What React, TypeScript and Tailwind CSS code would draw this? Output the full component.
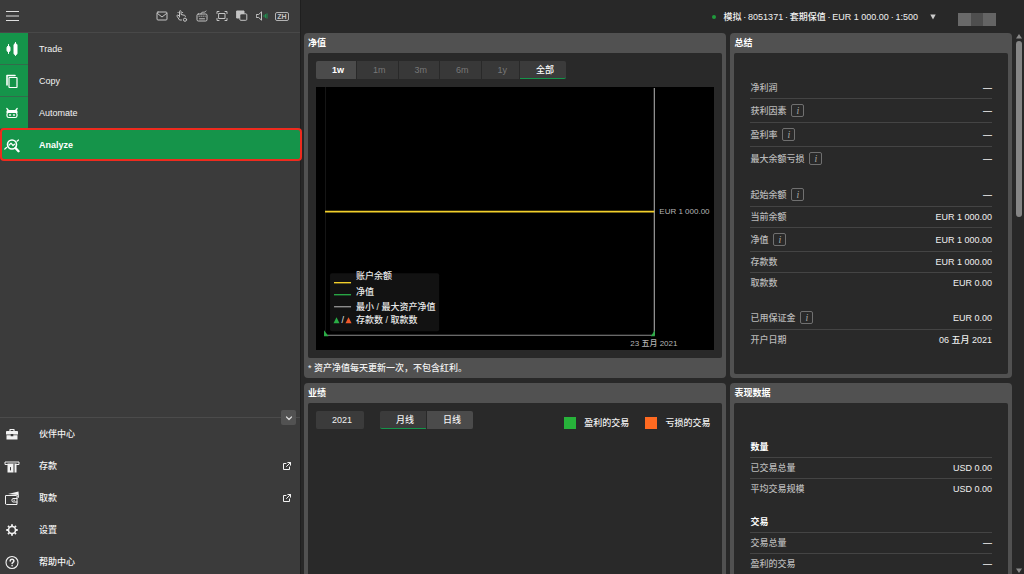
import type { ReactNode } from "react";

type IconProps = { children: ReactNode; size?: string; box?: number };

function Icon({ children, size = "size-4", box = 16 }: IconProps) {
  return (
    <svg
      viewBox={`0 0 ${box} ${box}`}
      className={`${size} shrink-0`}
      fill="none"
      stroke="currentColor"
      strokeWidth={1}
      strokeLinecap="round"
      strokeLinejoin="round"
      aria-hidden="true"
    >
      {children}
    </svg>
  );
}

const toolbar: { label: string; icon: ReactNode }[] = [
  {
    label: "Messages",
    icon: (
      <Icon size="size-3" box={12}>
        <rect x="1" y="2" width="10" height="8" rx="1" />
        <path d="M1.5 3.500 6 7l4.500-3.500" />
      </Icon>
    ),
  },
  {
    label: "One click trading",
    icon: (
      <Icon size="size-3" box={12}>
        <path d="M3.500 7V1.500a.8.8 0 0 1 1.600 0V4.500l3.400.8c.8.2 1 .7.9 1.300M3.500 6 1.800 5.200c-.7-.2-1.200.4-.8 1l2.500 3.800h2" />
        <path d="M2 2.500h.2M6.500 2.500h.2" />
        <circle cx="9" cy="9.700" r="1.600" />
      </Icon>
    ),
  },
  {
    label: "Shortcuts",
    icon: (
      <Icon size="size-3" box={12}>
        <rect x="1" y="4" width="10" height="7" rx="1.300" />
        <path d="M5 4c0-1.500 1-1.800 2.500-1.800S9.500 1.800 10 1" />
        <path d="M3 6.200h.4M5 6.200h.4M7 6.200h.4M9 6.200h.2M3.500 8.800h5" />
      </Icon>
    ),
  },
  {
    label: "Full screen",
    icon: (
      <Icon size="size-3" box={12}>
        <path d="M1 3.500V1.500h2M9 1.500h2v2M11 8.500v2H9M3 10.500H1v-2" />
        <rect x="3" y="3.500" width="6" height="5" />
      </Icon>
    ),
  },
  {
    label: "Detach",
    icon: (
      <Icon size="size-3" box={12}>
        <path d="M1 1h7v2.500H3.500V8H1z" fill="currentColor" />
        <rect x="3.800" y="3.800" width="7" height="6.500" rx="1" />
      </Icon>
    ),
  },
  {
    label: "Sound",
    icon: (
      <Icon size="size-3" box={12}>
        <path d="M.7 4.500h2l2.800-2.700v8.400L2.700 7.500h-2z" />
        <path d="M8 5.200v1.600M9.500 4.500v3M11 3.800v4.400" stroke="#219451" />
      </Icon>
    ),
  },
];

const modes: { label: string; icon: ReactNode }[] = [
  {
    label: "Trade",
    icon: (
      <Icon>
        <path d="M4.500 3.500v9M11.500 1.500v13" />
        <rect x="3" y="5.500" width="3" height="5" rx="1" fill="currentColor" />
        <rect x="10" y="3" width="3" height="10.500" rx="1" fill="currentColor" />
      </Icon>
    ),
  },
  {
    label: "Copy",
    icon: (
      <Icon>
        <path d="M3 12V2.500h8" strokeWidth="1.600" />
        <rect x="5" y="4.500" width="8" height="10" rx=".5" strokeWidth="1.200" />
      </Icon>
    ),
  },
  {
    label: "Automate",
    icon: (
      <Icon>
        <path d="M2.800 3.500 4.500 5.500M13.200 3.500 11.500 5.500" strokeWidth="1.200" />
        <path d="M2.500 8V6.500c0-1 .8-1.500 1.500-1.500h8c.7 0 1.500.5 1.500 1.500V8z" fill="currentColor" stroke="none" />
        <rect x="3" y="7.500" width="10" height="5" rx="1.800" strokeWidth="1.200" />
        <path d="M5.600 10h.9M9.500 10h.9" strokeWidth="1.500" />
      </Icon>
    ),
  },
];

const links: { label: string; external?: boolean; icon: ReactNode }[] = [
  {
    label: "伙伴中心",
    icon: (
      <Icon>
        <path d="M6 5V3.500h4V5" strokeWidth="1.200" />
        <path d="M3 5h10c.6 0 1 .4 1 1v2.500H9.300V8H6.700v.5H2V6c0-.6.4-1 1-1z" fill="currentColor" stroke="none" />
        <path d="M2.500 9.300h4.200v.9h2.600v-.9h4.200V13.500h-11z" fill="currentColor" stroke="none" />
      </Icon>
    ),
  },
  {
    label: "存款",
    external: true,
    icon: (
      <Icon>
        <path d="M3.500 6.500H1V4h14v2.500h-2.500" />
        <path d="M3.500 5.500h9V14.500h-9z" fill="currentColor" stroke="none" />
        <path d="M10 6v8.500M6.500 9.500v2.500" stroke="#3b3b3b" />
      </Icon>
    ),
  },
  {
    label: "取款",
    external: true,
    icon: (
      <Icon>
        <path d="M4 4 14.500 1.500 15 8l-1.500-1V5z" fill="currentColor" stroke="none" />
        <path d="M2 5.500h10.500l.5 1v8H2.500L1.500 14V6z" />
        <path d="M13 8.500H9c-1.500 0-1.500 3.500 0 3.500h4M9.800 10.200h.8" />
      </Icon>
    ),
  },
  {
    label: "设置",
    icon: (
      <Icon>
        <circle cx="8" cy="8" r="3.500" strokeWidth="1.600" />
        <path
          d="M8 2.300v1.800M8 11.900v1.800M2.300 8h1.800M11.900 8h1.800M4 4l1.200 1.200M10.800 10.800 12 12M4 12l1.200-1.200M10.800 5.200 12 4"
          strokeWidth="1.800"
          strokeLinecap="butt"
        />
      </Icon>
    ),
  },
  {
    label: "帮助中心",
    icon: (
      <Icon>
        <circle cx="8" cy="8.500" r="6" strokeWidth="1.100" />
        <path d="M6.200 7c0-2.500 3.700-2.300 3.700 0 0 1.300-1.800 1.300-1.800 2.600M8.100 11.500v.2" strokeWidth="1.500" />
      </Icon>
    ),
  },
];

function Sidebar() {
  return (
    <aside className="z-10 flex w-[300px] shrink-0 flex-col bg-[#3b3b3b] text-[#f2f2f2]">
      <header className="flex h-[33px] shrink-0 items-center justify-between border-b border-[#484848] pr-2 pl-1 text-[#c4c4c4]">
        <button type="button" aria-label="Menu" className="text-[#dedede]">
          <Icon>
            <path d="M2 3.500h13M2 8h13M2 12.500h13" strokeLinecap="butt" />
          </Icon>
        </button>
        <div className="flex">
          {toolbar.map((t) => (
            <button key={t.label} type="button" aria-label={t.label} className="flex w-5 justify-center">
              {t.icon}
            </button>
          ))}
          <button type="button" className="flex w-5 items-center justify-center">
            <span className="rounded-xs border border-[#b4b4b4] px-px text-[7px] leading-[7px] font-bold">ZH</span>
          </button>
        </div>
      </header>

      <nav className="flex flex-col">
        {modes.map((m) => (
          <a key={m.label} href="#" className="flex h-8 items-center gap-[11px]">
            <span className="flex h-8 w-7 items-center border-b border-[#336b4b] bg-[#15944a] pl-1 text-white">
              {m.icon}
            </span>
            {m.label}
          </a>
        ))}
        <a
          href="#"
          aria-current="page"
          className="-mt-px -mr-0.5 flex h-[33px] items-center gap-[11px] rounded-sm border-2 border-[#ee2b1e] bg-[#15944a] font-bold text-white"
        >
          <span className="flex w-[26px] items-center pl-0.5">
            <Icon>
              <circle cx="8" cy="7.500" r="4.500" strokeWidth="1.600" />
              <path d="m11.500 11 3 3.200" strokeWidth="2.400" />
              <path d="M.8 12 2.500 10.500M5.200 8 7 6.200l2 2.300 1.500-1.300M13 4.200l1.500-1.200" strokeWidth="1.200" />
            </Icon>
          </span>
          Analyze
        </a>
      </nav>

      <nav className="relative mt-auto -mb-1 border-t border-[#4b4b4b]">
        <button
          type="button"
          aria-label="Collapse"
          className="absolute -top-2 right-1 flex size-[15px] items-center justify-center rounded-xs bg-[#525252] text-[#dcdcdc]"
        >
          <Icon size="size-2" box={8}>
            <path d="M1.500 3 4 5.500 6.500 3" strokeWidth="1.200" />
          </Icon>
        </button>
        {links.map((l) => (
          <a key={l.label} href="#" className="flex h-8 items-center pr-2 pl-1">
            {l.icon}
            <span className="ml-[19px] flex-1">{l.label}</span>
            {l.external && (
              <Icon size="size-[10px]" box={10}>
                <path d="M4 2.500H1.500v6h6V6M5.800 1.500h2.700v2.700M8.500 1.500 4.500 5.500" />
              </Icon>
            )}
          </a>
        ))}
      </nav>
    </aside>
  );
}

function Panel({ title, footer, children }: { title: string; footer?: string; children: ReactNode }) {
  return (
    <section className="flex flex-col rounded-sm bg-[#515151] px-1">
      <h2 className="h-5 shrink-0 leading-5 font-bold text-white">{title}</h2>
      <div className="flex-1 rounded-xs bg-[#292929]">{children}</div>
      {footer ? <p className="h-5 leading-5">{footer}</p> : <div className="h-1" />}
    </section>
  );
}

function EquityChart() {
  return (
    <svg viewBox="0 0 398 263" className="block w-full bg-black" role="img" aria-label="净值">
      <path d="M9.500 0v247" stroke="#161616" />
      <path d="M338 1v247" stroke="#9a9a9a" strokeWidth="1.200" />
      <path d="M10 248h328" stroke="#8c8c8c" strokeWidth="1.200" />
      <path d="M9 124.500h329" stroke="#f2cf2b" strokeWidth="1.600" />
      <path d="M8 249v-6l4.500 6zM338.500 249v-6l-4 6z" fill="#2aad45" />
      <g fill="#b4b4b4" className="text-[8px]">
        <text x="343" y="127">EUR 1 000.00</text>
        <text x="314" y="259">23 五月 2021</text>
      </g>
      <rect x="14" y="186" width="109" height="58" rx="2" fill="#121212" />
      <path d="M18 195.500h17" stroke="#f2cf2b" strokeWidth="1.400" />
      <path d="M18 207.500h17" stroke="#28a544" strokeWidth="1.400" />
      <path d="M18 219.500h17" stroke="#8c8c8c" strokeWidth="1.400" />
      <path d="M17.500 236l3-6 3 6z" fill="#2aad45" />
      <path d="M29.500 236l3-6 3 6z" fill="#f0592b" />
      <g fill="#e8e8e8" className="text-[9px]">
        <text x="25.500" y="236">/</text>
        <text x="40" y="192">账户余额</text>
        <text x="40" y="208">净值</text>
        <text x="40" y="223">最小 / 最大资产净值</text>
        <text x="40" y="236">存款数 / 取款数</text>
      </g>
    </svg>
  );
}

const tabBase = "h-[18px] border-b pr-3 pl-4";
const ranges = ["1w", "1m", "3m", "6m", "1y", "全部"];

function RangeTabs() {
  return (
    <div className="mb-2 flex gap-px">
      {ranges.map((r, i) => {
        const look =
          i === 0
            ? "rounded-l-xs border-[#4b4b4b] bg-[#4b4b4b] font-bold text-white"
            : i === 5
              ? "rounded-r-xs border-[#15944a] bg-[#3b3b3b] text-white"
              : "border-[#383838] bg-[#383838] text-[#777777]";
        return (
          <button key={r} type="button" className={`${tabBase} ${look}`}>
            {r}
          </button>
        );
      })}
    </div>
  );
}

type Row = { label: string; value?: string; info?: boolean; head?: boolean };

function Rows({ groups }: { groups: Row[][] }) {
  return (
    <div className="flex flex-col gap-3">
      {groups.map((g) => (
        <dl key={g[0].label}>
          {g.map((r) => (
            <div
              key={r.label}
              className={`flex items-center justify-between border-b border-[#444444] last:border-transparent ${r.info ? "h-6" : "h-[21px]"}`}
            >
              <dt className={`flex items-center gap-[5px] ${r.head ? "font-bold text-white" : "text-[#b8b8b8]"}`}>
                {r.label}
                {r.info && (
                  <button
                    type="button"
                    aria-label={`${r.label} 说明`}
                    className="flex size-[13px] items-center justify-center rounded-xs border border-[#707070] font-['Liberation_Serif',serif] text-[10px] leading-none text-[#a8a8a8] italic"
                  >
                    i
                  </button>
                )}
              </dt>
              {!r.head && (
                <dd className={r.value ? "text-[#f0f0f0]" : "font-bold text-[#d0d0d0]"}>{r.value ?? "—"}</dd>
              )}
            </div>
          ))}
        </dl>
      ))}
    </div>
  );
}

const summary: Row[][] = [
  [
    { label: "净利润" },
    { label: "获利因素", info: true },
    { label: "盈利率", info: true },
    { label: "最大余额亏损", info: true },
  ],
  [
    { label: "起始余额", info: true },
    { label: "当前余额", value: "EUR 1 000.00" },
    { label: "净值", value: "EUR 1 000.00", info: true },
    { label: "存款数", value: "EUR 1 000.00" },
    { label: "取款数", value: "EUR 0.00" },
  ],
  [
    { label: "已用保证金", value: "EUR 0.00", info: true },
    { label: "开户日期", value: "06 五月 2021" },
  ],
];

const stats: Row[][] = [
  [
    { label: "数量", head: true },
    { label: "已交易总量", value: "USD 0.00" },
    { label: "平均交易规模", value: "USD 0.00" },
  ],
  [
    { label: "交易", head: true },
    { label: "交易总量" },
    { label: "盈利的交易" },
  ],
];

const account = ["模拟", "8051371", "套期保值", "EUR 1 000.00", "1:500"].join("\u2009·\u2009");

export default function App() {
  return (
    <div className="flex h-screen overflow-hidden bg-[#282828] font-['Liberation_Sans','Noto_Sans_CJK_SC',sans-serif] text-[9px] leading-4 font-medium text-[#f0f0f0]">
      <Sidebar />
      <main className="flex min-w-0 flex-1 flex-col border-l border-[#1f1f1f]">
        <header className="flex h-[33px] shrink-0 items-center justify-end pr-7">
          <span className="mr-2 size-1 rounded-full bg-[#1f9a3c]" />
          <button type="button" className="flex items-center gap-3">
            {account}
            <svg viewBox="0 0 6 6" className="size-1.5" fill="#cccccc" aria-hidden="true">
              <path d="M.3 .5h5.400L3 5.500z" />
            </svg>
          </button>
          <div className="mt-1.5 ml-[22px] flex h-[13px]">
            <span className="w-[13px] bg-[#696969]" />
            <span className="w-3 bg-[#4e4e4e]" />
            <span className="w-[13px] bg-[#646464]" />
          </div>
        </header>

        <div className="flex min-h-0 flex-1">
          <div className="grid min-h-0 flex-1 grid-cols-[3fr_2fr] grid-rows-[auto_auto] content-start gap-x-1 gap-y-[5px] overflow-hidden pl-[3px]">
            <Panel title="净值" footer="* 资产净值每天更新一次，不包含红利。">
              <div className="p-2">
                <RangeTabs />
                <EquityChart />
              </div>
            </Panel>
            <Panel title="总结">
              <div className="px-4 pt-[25px] pb-5">
                <Rows groups={summary} />
              </div>
            </Panel>
            <Panel title="业绩">
              <div className="flex items-end p-2">
                <button type="button" className={`${tabBase} mr-4 rounded-xs border-[#3b3b3b] bg-[#3b3b3b]`}>
                  2021
                </button>
                <div className="flex gap-px">
                  <button type="button" className={`${tabBase} rounded-l-xs border-[#15944a] bg-[#3b3b3b]`}>
                    月线
                  </button>
                  <button type="button" className={`${tabBase} rounded-r-xs border-[#4b4b4b] bg-[#4b4b4b]`}>
                    日线
                  </button>
                </div>
                <ul className="mr-1 ml-auto flex gap-4 leading-3">
                  <li className="flex items-center gap-2">
                    <span className="size-3 bg-[#27b23a]" />
                    盈利的交易
                  </li>
                  <li className="flex items-center gap-2">
                    <span className="size-3 bg-[#ff6a21]" />
                    亏损的交易
                  </li>
                </ul>
              </div>
            </Panel>
            <Panel title="表现数据">
              <div className="px-4 pt-[34px] pb-6">
                <Rows groups={stats} />
              </div>
            </Panel>
          </div>

          <div className="flex w-3 flex-col items-center pl-0.5" aria-hidden="true">
            <svg viewBox="0 0 6 6" className="mb-0.5 size-1.5" fill="#8a8a8a">
              <path d="M0 5.500h6L3 1z" />
            </svg>
            <div className="min-h-0 flex-1">
              <div className="h-1/3 w-1.5 rounded-full bg-[#858585]" />
            </div>
            <svg viewBox="0 0 6 6" className="size-1.5" fill="#8a8a8a">
              <path d="M0 .5h6L3 5z" />
            </svg>
          </div>
        </div>
      </main>
    </div>
  );
}
